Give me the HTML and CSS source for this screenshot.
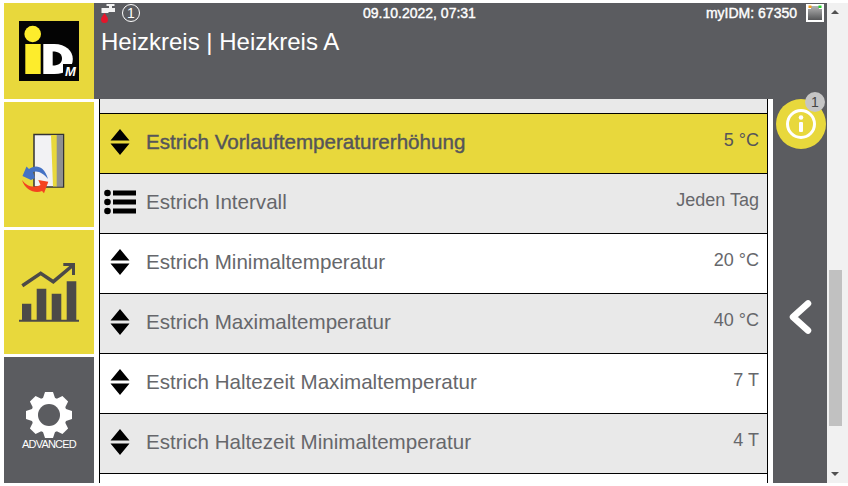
FILE: index.html
```html
<!DOCTYPE html>
<html lang="de">
<head>
<meta charset="utf-8">
<title>Heizkreis A</title>
<link rel="stylesheet" href="styles.css">
</head>
<body>
<div class="app">
  <aside class="side">
    <div class="tile tile-logo">
      <svg class="logo" width="60" height="60" viewBox="0 0 60 60">
        <rect width="60" height="60" fill="#040404"/>
        <circle cx="13.700" cy="13" r="8.300" fill="#fdec2c"/>
        <rect x="6.300" y="23" width="15.400" height="30" fill="#fdec2c"/>
        <path d="M24.300 23h11c11.500 0 18.500 7 18.500 15 0 9-7 15-18.500 15h-11z" fill="#fff"/>
        <path d="M33.700 30.500v14c6 0 9.300-2.500 9.300-7s-3.300-7-9.300-7z" fill="#040404"/>
        <rect x="44" y="43" width="16" height="13" fill="#040404"/>
        <text class="logo-m" x="46" y="55">M</text>
      </svg>
    </div>
    <div class="tile tile-wall">
      <svg width="60" height="73" viewBox="19 128 60 73">
        <rect x="34" y="134.500" width="29.500" height="52.500" fill="#f2f2f4" stroke="#333" stroke-width="1.500"/>
        <path d="M51 135h6v51.500h-4z" fill="#e8d83c"/>
        <rect x="56.700" y="135" width="6.300" height="51.500" fill="#8f9090"/>
        <path d="M22.500 176L26.500 166.500L29 169C35 164.500 44 165 48 179C44 174 38 170 33 172L35 178L31 180z" fill="#4472c4"/>
        <path d="M22 180C25 190 35 194 42 191L44 193.300L48.300 181.700L38.300 180L40.500 185C34 188 27 187 22 180z" fill="#f4431f"/>
      </svg>
    </div>
    <div class="tile tile-chart">
      <svg width="60" height="62" viewBox="19 261 60 62">
        <path d="M19 320.700h60" stroke="#4c4a48" stroke-width="2"/>
        <path d="M22 303.700h9.300V321H22zM36.700 288.700h9.600V321h-9.600zM51.700 293.700h9.600V321h-9.600zM66.700 281.300h9.600V321h-9.600z" fill="#4c4a48"/>
        <path d="M22.300 285.700L40.700 273.300L53.300 281.700L72 266" fill="none" stroke="#4c4a48" stroke-width="3.500"/>
        <path d="M63.300 264.500H73.500V275" fill="none" stroke="#4c4a48" stroke-width="3"/>
      </svg>
    </div>
    <div class="tile tile-adv">
      <svg width="46" height="46" viewBox="-23 -23 46 46">
        <g fill="#fff">
          <path id="tooth" d="M-6-17L-4-23H4L6-17V17L4 23H-4L-6 17z"/>
          <path d="M-6-17L-4-23H4L6-17V17L4 23H-4L-6 17z" transform="rotate(45)"/>
          <path d="M-6-17L-4-23H4L6-17V17L4 23H-4L-6 17z" transform="rotate(90)"/>
          <path d="M-6-17L-4-23H4L6-17V17L4 23H-4L-6 17z" transform="rotate(135)"/>
          <circle r="18"/>
        </g>
        <circle r="11" fill="#5b5c60"/>
      </svg>
      <span class="adv-label">ADVANCED</span>
    </div>
  </aside>
  <main class="main">
    <header class="head">
      <div class="status">
        <div class="status-left">
          <svg width="15" height="20" viewBox="0 0 15 20">
            <path d="M5.500 1h8v2H11v2h3v4H7.500v1h-7V5H8V3H5.500z" fill="#f2f2f2"/>
            <path d="M3.500 10c2 3 3.500 4.500 3.500 6.500a3.500 3.500 0 0 1-7 0c0-2 1.500-3.500 3.500-6.500z" fill="#e3152b"/>
          </svg>
          <span class="badge-one">1</span>
        </div>
        <span class="stamp">09.10.2022, 07:31</span>
        <div class="status-right">
          <span class="stamp">myIDM: 67350</span>
          <svg width="18" height="18" viewBox="0 0 18 18">
            <defs>
              <linearGradient id="plug" x1="0" y1="0" x2="0" y2="1">
                <stop offset="0" stop-color="#b4b4b4"/>
                <stop offset="1" stop-color="#555658"/>
              </linearGradient>
            </defs>
            <rect width="18" height="18" fill="#fff"/>
            <path d="M2 2h14v14H2z" fill="url(#plug)"/>
            <path d="M2 2h3v3H2zM16 2h-3v3h3z" fill="#fff"/>
            <rect x="2.500" y="1.500" width="3" height="2.500" fill="#f5a11e"/>
            <rect x="12.500" y="1.500" width="3" height="2.500" fill="#23d22d"/>
          </svg>
        </div>
      </div>
      <h1 class="title">Heizkreis | Heizkreis A</h1>
    </header>
    <div class="body">
      <section class="list">
        <div class="stub"></div>
        <div class="row row-active">
          <svg class="ico" width="20" height="26" viewBox="0 0 20 26"><path d="M10 0l9.500 11.500H.500zM.500 14.500h19L10 26z" fill="#000"/></svg>
          <span class="name">Estrich Vorlauftemperaturerhöhung</span><span class="val">5 °C</span>
        </div>
        <div class="row row-grey">
          <svg class="ico-list" width="32" height="26" viewBox="0 0 32 26"><g fill="#000"><circle cx="3.500" cy="4" r="3.300"/><circle cx="3.500" cy="13" r="3.300"/><circle cx="3.500" cy="22" r="3.300"/><rect x="9" y="1.500" width="23" height="5"/><rect x="9" y="10.500" width="23" height="5"/><rect x="9" y="19.500" width="23" height="5"/></g></svg>
          <span class="name">Estrich Intervall</span><span class="val">Jeden Tag</span>
        </div>
        <div class="row">
          <svg class="ico" width="20" height="26" viewBox="0 0 20 26"><path d="M10 0l9.500 11.500H.500zM.500 14.500h19L10 26z" fill="#000"/></svg>
          <span class="name">Estrich Minimaltemperatur</span><span class="val">20 °C</span>
        </div>
        <div class="row row-grey">
          <svg class="ico" width="20" height="26" viewBox="0 0 20 26"><path d="M10 0l9.500 11.500H.500zM.500 14.500h19L10 26z" fill="#000"/></svg>
          <span class="name">Estrich Maximaltemperatur</span><span class="val">40 °C</span>
        </div>
        <div class="row">
          <svg class="ico" width="20" height="26" viewBox="0 0 20 26"><path d="M10 0l9.500 11.500H.500zM.500 14.500h19L10 26z" fill="#000"/></svg>
          <span class="name">Estrich Haltezeit Maximaltemperatur</span><span class="val">7 T</span>
        </div>
        <div class="row row-grey">
          <svg class="ico" width="20" height="26" viewBox="0 0 20 26"><path d="M10 0l9.500 11.500H.500zM.500 14.500h19L10 26z" fill="#000"/></svg>
          <span class="name">Estrich Haltezeit Minimaltemperatur</span><span class="val">4 T</span>
        </div>
      </section>
      <nav class="rail">
        <div class="info">
          <svg width="50" height="50" viewBox="0 0 50 50">
            <circle cx="25" cy="25" r="25" fill="#e8d83c"/>
            <circle cx="25" cy="25" r="13.500" fill="none" stroke="#fff" stroke-width="3"/>
            <circle cx="25" cy="18.500" r="2.300" fill="#fff"/>
            <rect x="23" y="23" width="4" height="10" rx="1" fill="#fff"/>
          </svg>
          <span class="info-count">1</span>
        </div>
        <svg class="back" width="24" height="34" viewBox="0 0 24 34"><path d="M20 3.500L5 17l15 13.500" fill="none" stroke="#fff" stroke-width="6.500" stroke-linecap="round" stroke-linejoin="round"/></svg>
      </nav>
    </div>
  </main>
  <div class="scroll">
    <span class="arrow-up"></span>
    <div class="track"><div class="thumb"></div></div>
    <span class="arrow-down"></span>
  </div>
</div>
</body>
</html>
```
FILE: styles.css
```css
html, body {
  margin: 0;
  padding: 0;
  height: 100%;
  background: #fff;
  overflow: hidden;
}
body {
  padding: 3px 0 0 4px;
  box-sizing: border-box;
  font-family: "Liberation Sans", Arial, sans-serif;
}
.app {
  display: flex;
  height: 480px;
}
.side {
  width: 90px;
  display: flex;
  flex-direction: column;
  gap: 3px;
  flex: none;
}
.tile {
  display: flex;
  flex-direction: column;
  align-items: center;
  justify-content: center;
  background: #e8d83c;
  flex: none;
}
.tile-logo { height: 96px; }
.tile-wall { height: 125px; }
.tile-chart { height: 124px; }
.tile-adv {
  height: 126px;
  box-sizing: border-box;
  padding-top: 3px;
  background: #5b5c60;
}
.logo-m {
  font-size: 13px;
  font-style: italic;
  font-weight: 700;
  fill: #fff;
}
.adv-label {
  font-size: 11px;
  color: #fff;
  letter-spacing: -0.8px;
  line-height: 13px;
}
.main {
  width: 733px;
  flex: none;
  display: flex;
  flex-direction: column;
}
.head {
  height: 96px;
  flex: none;
  background: #5b5c60;
  color: #fff;
  padding: 0 3px 0 7px;
  box-sizing: border-box;
}
.status {
  display: flex;
  align-items: center;
  height: 20px;
}
.status-left {
  display: flex;
  align-items: center;
  gap: 6px;
  width: 262px;
}
.status-right {
  display: flex;
  align-items: center;
  gap: 9px;
  margin-left: auto;
}
.stamp {
  font-size: 14px;
  -webkit-text-stroke: 0.4px #fff;
}
.badge-one {
  width: 16px;
  height: 16px;
  border: 1px solid #fff;
  border-radius: 50%;
  font-size: 14px;
  line-height: 16px;
  text-align: center;
}
.title {
  margin: 4px 0 0;
  font-size: 24px;
  font-weight: 400;
  line-height: 30px;
}
.body {
  flex: 1;
  display: flex;
  min-height: 0;
}
.list {
  margin-left: 5px;
  width: 669px;
  flex: none;
  box-sizing: border-box;
  border-left: 1px solid #000;
  border-right: 1px solid #000;
  overflow: hidden;
}
.stub {
  height: 14px;
  background: #e9e9e9;
  border-bottom: 1px solid #000;
}
.row {
  height: 59px;
  display: flex;
  align-items: center;
  background: #fff;
  border-bottom: 1px solid #000;
  color: #66676b;
  font-size: 20.6px;
  padding: 0 8px 0 4px;
}
.row-grey { background: #e9e9e9; }
.row-active { background: #e8d83c; color: #55555a; }
.row-active .name { -webkit-text-stroke: 0.4px #55555a; }
.ico { flex: none; margin: 0 6px 3px 6px; }
.ico-list { flex: none; margin: 0 0 3px 0; }
.name {
  margin: 0 0 4px 10px;
  flex: 1;
}
.val {
  font-size: 18px;
  align-self: flex-start;
  margin-top: 16px;
}
.rail {
  margin-left: 5px;
  width: 54px;
  flex: none;
  background: #5b5c60;
  display: flex;
  flex-direction: column;
  align-items: center;
}
.info {
  position: relative;
  margin-left: 2px;
  height: 50px;
}
.info-count {
  position: absolute;
  top: -7px;
  right: 1px;
  width: 20px;
  height: 20px;
  border-radius: 50%;
  background: #c5c5c5;
  color: #444;
  font-size: 14px;
  line-height: 20px;
  text-align: center;
}
.back { margin-top: 151px; }
.scroll {
  width: 21px;
  flex: none;
  background: #f1f1f1;
  display: flex;
  flex-direction: column;
  align-items: flex-start;
  padding-left: 2px;
  box-sizing: border-box;
}
.arrow-up, .arrow-down {
  display: block;
  width: 0;
  height: 0;
  border-left: 4px solid transparent;
  border-right: 4px solid transparent;
  flex: none;
}
.arrow-up { border-bottom: 4px solid #505050; margin: 7px 0 0 2px; }
.arrow-down { border-top: 4px solid #505050; margin: 0 0 7px 2px; }
.track { flex: 1; width: 13px; padding-top: 256px; box-sizing: border-box; }
.thumb { height: 156px; background: #c1c1c1; }
```
